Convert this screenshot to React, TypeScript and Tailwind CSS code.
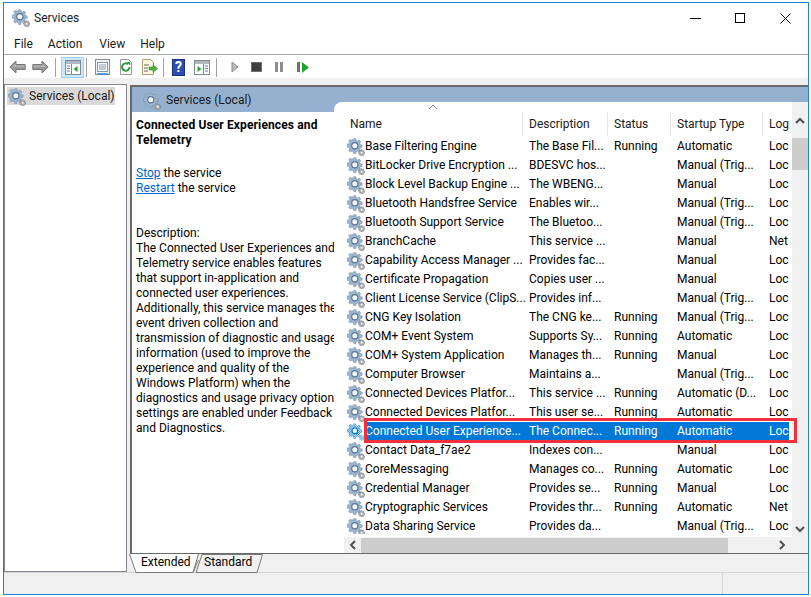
const FONT = "font-['Roboto','Noto_Sans',sans-serif]";

type Service = {
  name: string;
  desc: string;
  status: string;
  startup: string;
  logon: string;
  selected?: boolean;
};

const services: Service[] = [
  { name: "Base Filtering Engine", desc: "The Base Fil...", status: "Running", startup: "Automatic", logon: "Loc" },
  { name: "BitLocker Drive Encryption ...", desc: "BDESVC hos...", status: "", startup: "Manual (Trig...", logon: "Loc" },
  { name: "Block Level Backup Engine ...", desc: "The WBENG...", status: "", startup: "Manual", logon: "Loc" },
  { name: "Bluetooth Handsfree Service", desc: "Enables wir...", status: "", startup: "Manual (Trig...", logon: "Loc" },
  { name: "Bluetooth Support Service", desc: "The Bluetoo...", status: "", startup: "Manual (Trig...", logon: "Loc" },
  { name: "BranchCache", desc: "This service ...", status: "", startup: "Manual", logon: "Net" },
  { name: "Capability Access Manager ...", desc: "Provides fac...", status: "", startup: "Manual", logon: "Loc" },
  { name: "Certificate Propagation", desc: "Copies user ...", status: "", startup: "Manual", logon: "Loc" },
  { name: "Client License Service (ClipS...", desc: "Provides inf...", status: "", startup: "Manual (Trig...", logon: "Loc" },
  { name: "CNG Key Isolation", desc: "The CNG ke...", status: "Running", startup: "Manual (Trig...", logon: "Loc" },
  { name: "COM+ Event System", desc: "Supports Sy...", status: "Running", startup: "Automatic", logon: "Loc" },
  { name: "COM+ System Application", desc: "Manages th...", status: "Running", startup: "Manual", logon: "Loc" },
  { name: "Computer Browser", desc: "Maintains a...", status: "", startup: "Manual (Trig...", logon: "Loc" },
  { name: "Connected Devices Platfor...", desc: "This service ...", status: "Running", startup: "Automatic (D...", logon: "Loc" },
  { name: "Connected Devices Platfor...", desc: "This user se...", status: "Running", startup: "Automatic", logon: "Loc" },
  { name: "Connected User Experience...", desc: "The Connec...", status: "Running", startup: "Automatic", logon: "Loc", selected: true },
  { name: "Contact Data_f7ae2", desc: "Indexes con...", status: "", startup: "Manual", logon: "Loc" },
  { name: "CoreMessaging", desc: "Manages co...", status: "Running", startup: "Automatic", logon: "Loc" },
  { name: "Credential Manager", desc: "Provides se...", status: "Running", startup: "Manual", logon: "Loc" },
  { name: "Cryptographic Services", desc: "Provides thr...", status: "Running", startup: "Automatic", logon: "Net" },
  { name: "Data Sharing Service", desc: "Provides da...", status: "", startup: "Manual (Trig...", logon: "Loc" },
];

const descLines = [
  "Description:",
  "The Connected User Experiences and",
  "Telemetry service enables features",
  "that support in-application and",
  "connected user experiences.",
  "Additionally, this service manages the",
  "event driven collection and",
  "transmission of diagnostic and usage",
  "information (used to improve the",
  "experience and quality of the",
  "Windows Platform) when the",
  "diagnostics and usage privacy option",
  "settings are enabled under Feedback",
  "and Diagnostics.",
];

const GEAR_BIG =
  "M7.2 0.8h2.4l.4 2 1.5.6 1.7-1.1 1.7 1.7-1.1 1.7.6 1.5 2 .4v2.4l-2 .4-.6 1.5 1.1 1.7-1.7 1.7-1.7-1.1-1.5.6-.4 2H7.2l-.4-2-1.5-.6-1.7 1.1-1.7-1.7 1.1-1.7-.6-1.5-2-.4V6.600l2-.4.6-1.5-1.1-1.700 1.700-1.700 1.700 1.100 1.500-.6z";

const Gear = ({ selected = false }: { selected?: boolean }) => {
  if (selected) {
    // the selected icon is drawn dithered against the highlight colour
    return (
      <svg width="18" height="18" viewBox="0 0 18 18" className="shrink-0">
        <defs>
          <pattern id="dither" width="2" height="2" patternUnits="userSpaceOnUse">
            <rect width="2" height="2" fill="#ffffff" />
            <rect width="1" height="1" fill="#0078d7" />
            <rect x="1" y="1" width="1" height="1" fill="#0078d7" />
          </pattern>
        </defs>
        <path d={GEAR_BIG} fill="#0078d7" transform="scale(0.92)" />
        <path d={GEAR_BIG} fill="url(#dither)" transform="scale(0.92)" />
        <circle cx="7.8" cy="7.800" r="2.800" fill="#ffffff" stroke="#0078d7" strokeWidth="1.200" />
        <path d={GEAR_BIG} fill="url(#dither)" transform="translate(11.500 11.500) scale(0.38)" />
      </svg>
    );
  }
  return (
    <svg width="18" height="18" viewBox="0 0 18 18" className="shrink-0">
      <path d={GEAR_BIG} fill="#9ab5d0" stroke="#7d93a8" strokeWidth="0.700" transform="scale(0.92)" />
      <circle cx="7.8" cy="7.800" r="3.100" fill="#f4f8fb" stroke="#5f768c" strokeWidth="1.200" />
      <path d={GEAR_BIG} fill="#b0b3b7" stroke="#74787d" strokeWidth="1.500" transform="translate(11.500 11.500) scale(0.38)" />
      <circle cx="14.700" cy="14.700" r="0.900" fill="#ffffff" />
    </svg>
  );
};

const Separator = ({ className }: { className: string }) => (
  <div className={`w-px h-[19px] bg-[#a0a0a0] shrink-0 ${className}`} />
);

const ArrowIcon = ({ flip = false }: { flip?: boolean }) => (
  <svg width="17" height="14" viewBox="0 0 17 14" className={flip ? "-scale-x-100" : ""}>
    <path d="M.8 7L7 1v3.500h9.200v5H7V13z" fill="#999999" stroke="#777777" />
    <path d="M3 7l3.500-3.300v1.800h9V7z" fill="#b4b4b4" />
  </svg>
);

const PaneIcon = ({ right = false }: { right?: boolean }) => (
  <svg width="16" height="15" viewBox="0 0 16 15">
    <rect x="0.500" y="0.500" width="15" height="14" fill="#ffffff" stroke="#7f8a94" />
    <rect x="1" y="1" width="14" height="3" fill="#aeb9c4" />
    <path d={right ? "M9.500 4v10" : "M6.500 4v10"} stroke="#7f8a94" />
    {right ? (
      <>
        <path d="M11 6h3M11 8.500h3M11 11h3" stroke="#4f81bd" />
        <path d="M3.500 6v6l4-3z" fill="#22a52f" />
      </>
    ) : (
      <>
        <path d="M2 6h3M2 8.500h3M2 11h3" stroke="#4f81bd" />
        <path d="M12.500 6v6l-4-3z" fill="#22a52f" />
      </>
    )}
  </svg>
);

const Toolbar = () => (
  <div className="h-[23px] pt-px bg-white flex items-center shrink-0">
    <div className="ml-[5px] flex"><ArrowIcon /></div>
    <div className="ml-[6px] flex"><ArrowIcon flip /></div>
    <Separator className="ml-[6px]" />
    <div className="ml-[5px] w-[23px] h-[21px] bg-[#cce8ff] border border-[#99d1ff] flex items-center justify-center">
      <PaneIcon />
    </div>
    <Separator className="ml-[2px]" />
    <svg width="15" height="16" viewBox="0 0 15 16" className="ml-[8px]">
      <rect x="0.500" y="0.500" width="14" height="15" fill="#f4f4f4" stroke="#8b8b8b" />
      <rect x="2.500" y="3.500" width="10" height="9" fill="#fff" stroke="#7d98b3" />
      <path d="M4 6h7M4 8h7M4 10h7" stroke="#7d98b3" />
      <path d="M2 15h11" stroke="#2f8fe0" strokeWidth="1.500" />
    </svg>
    <svg width="14" height="16" viewBox="0 0 14 16" className="ml-[9px]">
      <path d="M1.500 .5h8l3 3v12h-11z" fill="#fff" stroke="#9a9a9a" />
      <path d="M10.500 8a3.700 3.700 0 1 1-1.200-2.700" fill="none" stroke="#2a9d3a" strokeWidth="2" />
      <path d="M8 2.800l3.500 .4-.5 3.500z" fill="#2a9d3a" />
    </svg>
    <svg width="17" height="16" viewBox="0 0 17 16" className="ml-[8px]">
      <path d="M1.500 .5h8l3 3v12h-11z" fill="#fbf7dc" stroke="#a8a27a" />
      <path d="M3 6h5M3 9h4M3 12h4" stroke="#6f6f6f" />
      <path d="M8 8h4V5.500L16.500 9.500 12 13.500V11H8z" fill="#49b13c" stroke="#2d8a2b" strokeWidth="0.500" />
    </svg>
    <Separator className="ml-[5px]" />
    <div className="ml-[8px] w-[13px] h-[17px] bg-[#2a4fb0] border border-[#1c3278] flex items-center justify-center text-white text-[14px] leading-none font-bold">?</div>
    <div className="ml-[9px] flex"><PaneIcon right /></div>
    <Separator className="ml-[6px]" />
    <svg width="8" height="12" viewBox="0 0 8 12" className="ml-[14px]">
      <path d="M1 1l6 5-6 5z" fill="#bdbdbd" stroke="#8a8a8a" />
    </svg>
    <div className="ml-[12px] w-[11px] h-[10px] bg-[#3f3f3f] border border-[#707070]" />
    <div className="ml-[13px] flex gap-[2px]">
      <div className="w-[3px] h-[10px] bg-[#8d8d8d]" />
      <div className="w-[3px] h-[10px] bg-[#8d8d8d]" />
    </div>
    <div className="ml-[14px] flex items-center gap-[2px]">
      <div className="w-[3px] h-[10px] bg-[#6f6f6f]" />
      <svg width="7" height="11" viewBox="0 0 7 11"><path d="M0 0l7 5.500L0 11z" fill="#22a52f" /></svg>
    </div>
  </div>
);

const Chevron = ({ d }: { d: string }) => (
  <svg width="10" height="10" viewBox="0 0 10 10">
    <path d={d} fill="none" stroke="#505050" strokeWidth="2" />
  </svg>
);

const ServiceRow = ({ service }: { service: Service }) => {
  const textColor = service.selected ? "text-white" : "text-[#000000]";
  return (
    <div className="h-[19px] flex items-center pl-[3px] whitespace-nowrap">
      <Gear selected={service.selected} />
      <div className={`flex h-[19px] items-center w-[424px] ${service.selected ? "bg-[#0078d7]" : ""} ${textColor}`}>
        <span className="w-[164px] overflow-hidden">{service.name}</span>
        <span className="w-[85px] overflow-hidden">{service.desc}</span>
        <span className="w-[63px]">{service.status}</span>
        <span className="w-[92px]">{service.startup}</span>
        <span className="w-[20px] overflow-hidden">{service.logon}</span>
      </div>
    </div>
  );
};

const HeaderCell = ({ label, className }: { label: string; className: string }) => (
  <div className={`h-[24px] flex items-center border-r border-[#e5e5e5] shrink-0 ${className}`}>{label}</div>
);

const ServiceList = () => (
  <div className="relative flex-1 -mt-[10px] bg-white rounded-tl-lg flex flex-col min-w-0 pl-[10px]">
    <div className="flex-1 flex min-h-0">
      <div className="flex-1 min-w-0 overflow-hidden">
        <div className="relative h-[24px] mt-[10px] flex text-[#1a1a1a] whitespace-nowrap">
          <svg width="10" height="6" viewBox="0 0 10 6" className="absolute left-[84px] -top-[8px]">
            <path d="M1 5l4-4 4 4" fill="none" stroke="#8a8a8a" />
          </svg>
          <HeaderCell label="Name" className="w-[179px] pl-[6px]" />
          <HeaderCell label="Description" className="w-[85px] pl-[6px]" />
          <HeaderCell label="Status" className="w-[63px] pl-[6px]" />
          <HeaderCell label="Startup Type" className="w-[92px] pl-[6px]" />
          <div className="pl-[6px] h-[24px] flex items-center">Log</div>
        </div>
        <div className="h-[398px] overflow-hidden pt-[1px]">
          {services.map((service, i) => (
            <ServiceRow key={i} service={service} />
          ))}
        </div>
      </div>
      <div className="w-[16px] bg-[#f0f0f0] flex flex-col shrink-0">
        <div className="h-[17px] mt-[10px] flex items-center justify-center"><Chevron d="M1 7l4-4 4 4" /></div>
        <div className="h-[32px] mt-[9px] bg-[#cdcdcd]" />
        <div className="mt-auto h-[17px] flex items-center justify-center"><Chevron d="M1 3l4 4 4-4" /></div>
      </div>
    </div>
    <div className="h-[16px] bg-[#f0f0f0] flex items-center shrink-0">
      <div className="w-[17px] flex justify-center"><Chevron d="M7 1L3 5l4 4" /></div>
      <div className="w-[367px] h-[15px] bg-[#cdcdcd]" />
      <div className="ml-[49px] flex"><Chevron d="M3 1l4 4-4 4" /></div>
    </div>
  </div>
);

const Tabs = () => (
  <div className="h-[19px] flex items-start bg-[#f0f0f0] border-t border-[#696969] shrink-0">
    <div className="relative -ml-px w-[135px] h-[19px]">
      <svg width="135" height="19" viewBox="0 0 135 19" className="absolute inset-0">
        <path d="M0.500 0L7 18.500H64L69.500 0" fill="#fff" stroke="#7a7a7a" />
        <path d="M67 18.500L73 0.500H133.500L128 18.500H71z" fill="#f0f0f0" stroke="#7a7a7a" />
        <path d="M64 18.500L69.500 6" stroke="#7a7a7a" fill="none" />
      </svg>
      <span className="absolute left-[12px] top-px text-black">Extended</span>
      <span className="absolute left-[75px] top-px text-black">Standard</span>
    </div>
  </div>
);

const DetailPane = () => (
  <div className="w-[202px] shrink-0 bg-white pl-[4px] pt-[6px] leading-[15px] text-black whitespace-nowrap">
    <div className="font-bold tracking-[0.13px]">
      Connected User Experiences and
      <br />
      Telemetry
    </div>
    <div className="mt-[18px]">
      <a className="text-[#0066cc] underline">Stop</a> the service
    </div>
    <div>
      <a className="text-[#0066cc] underline">Restart</a> the service
    </div>
    <div className="mt-[30px]">
      {descLines.map((line) => (
        <div key={line}>{line}</div>
      ))}
    </div>
  </div>
);

export default function App() {
  return (
    <div className={`w-[811px] h-[597px] bg-white pl-[3px] pt-[2px] text-[12px] leading-[15px] ${FONT}`}>
      <div className="relative w-[806px] h-[593px] border border-[#1883d7] bg-[#f0f0f0] flex flex-col overflow-hidden">
        {/* title bar */}
        <div className="h-[30px] bg-white flex items-center pl-[8px] shrink-0">
          <Gear />
          <span className="ml-[4px] text-[#1a1a1a]">Services</span>
          <div className="ml-auto flex items-center pr-[17px]">
            <div className="w-[11px] h-px bg-black" />
            <div className="ml-[34px] w-[10px] h-[10px] border border-black" />
            <svg width="11" height="11" viewBox="0 0 11 11" className="ml-[35px]">
              <path d="M.5.5l10 10M10.500.5l-10 10" stroke="#000" />
            </svg>
          </div>
        </div>
        {/* menu */}
        <div className="h-[22px] pt-[2px] bg-white border-b border-[#a9a9a9] flex items-center pl-[10px] text-[#1a1a1a] shrink-0">
          <span>File</span>
          <span className="ml-[15px]">Action</span>
          <span className="ml-[17px]">View</span>
          <span className="ml-[15px]">Help</span>
        </div>
        <Toolbar />
        {/* main area */}
        <div className="flex flex-1 min-h-0 pt-[6px] gap-[3px]">
          <div className="w-[123px] bg-white border border-[#828790] p-[2px] shrink-0">
            <div className="h-[18px] w-[108px] bg-[#d9d9d9] flex items-center pl-[1px] pt-px whitespace-nowrap">
              <Gear />
              <span className="ml-[3px] text-[#1a1a1a]">Services (Local)</span>
            </div>
          </div>
          <div className="flex-1 min-w-0 flex flex-col pt-px">
            <div className="flex-1 min-h-0 flex flex-col border-t-2 border-l-2 border-[#696969]">
              <div className="h-[25px] pt-[2px] bg-[#96b1cf] flex items-center pl-[11px] shrink-0">
                <Gear />
                <span className="ml-[5px] text-[#1a1a1a]">Services (Local)</span>
              </div>
              <div className="flex-1 min-h-0 flex">
                <DetailPane />
                <ServiceList />
              </div>
            </div>
            <Tabs />
          </div>
        </div>
        {/* status bar */}
        <div className="h-[22px] border-t border-[#d6d6d6] flex shrink-0">
          <div className="ml-auto w-[86px] border-l border-[#d6d6d6]" />
        </div>
        {/* red callout */}
        <div className="absolute left-[360px] top-[415px] w-[433px] h-[25px] border-[3px] border-[#f2303c]" />
      </div>
    </div>
  );
}
